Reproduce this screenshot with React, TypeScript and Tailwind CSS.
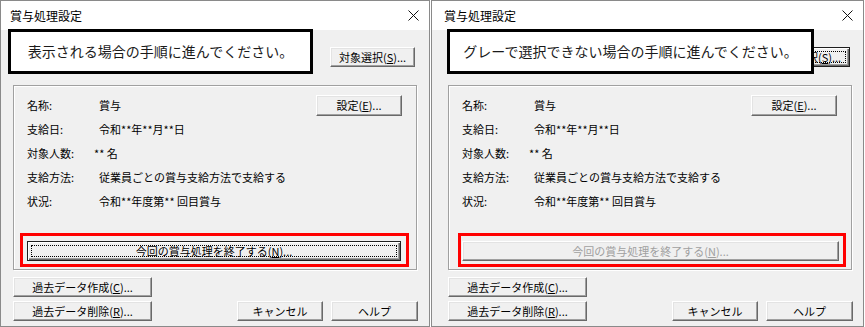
import type { ReactNode } from "react";
import clsx from "clsx";

const jp = "font-['Noto_Sans_CJK_JP','Noto_Sans',sans-serif]";

function Btn({
    children,
    className,
    focus,
    disabled,
}: {
    children: ReactNode;
    className?: string;
    focus?: boolean;
    disabled?: boolean;
}) {
    return (
        <button
            type="button"
            className={clsx(
                "relative flex items-center justify-center h-[20px] text-[11px] leading-none bg-[#f0f0f0] whitespace-nowrap",
                focus
                    ? "border border-[#1e1e1e] shadow-[inset_1px_1px_0_#fff,inset_-1px_-1px_0_#696969,inset_-2px_-2px_0_#a0a0a0]"
                    : "border border-t-white border-l-white border-r-[#696969] border-b-[#696969] shadow-[inset_-1px_-1px_0_#a0a0a0,inset_1px_1px_0_#e3e3e3]",
                disabled ? "text-[#a0a0a0]" : "text-black",
                className
            )}
        >
            {focus && <span className="absolute inset-[3px] border border-dotted border-black" />}
            <span className="relative">{children}</span>
        </button>
    );
}

const rows = [
    { label: "名称:", value: "賞与" },
    { label: "支給日:", value: "令和**年**月**日" },
    { label: "対象人数:", value: "** 名", shift: true },
    { label: "支給方法:", value: "従業員ごとの賞与支給方法で支給する" },
    { label: "状況:", value: "令和**年度第** 回目賞与" },
];

function Dialog({
    wide,
    note,
    endEnabled,
}: {
    wide?: boolean;
    note: string;
    endEnabled?: boolean;
}) {
    return (
        <div
            className={clsx(
                "relative flex flex-col h-[327px] border border-[#8a8a8a] bg-[#f0f0f0] shrink-0",
                wide ? "w-[433px]" : "w-[430px]"
            )}
        >
            <div className={clsx("h-[29px] bg-white flex items-center pr-[10px]", wide ? "pl-[12px]" : "pl-[9px]")}>
                <span className="text-[12px] text-black">賞与処理設定</span>
                <svg className="ml-auto" width="11" height="11" viewBox="0 0 11 11">
                    <path d="M0.5 0.5 L10.5 10.5 M10.5 0.5 L0.5 10.5" stroke="#111" strokeWidth="1" fill="none" />
                </svg>
            </div>

            <div className={clsx("flex flex-col pt-[17px] pb-[5px]", wide ? "pl-[16px]" : "pl-[12px]")}>
                <div className="flex justify-end w-[404px] pr-[2px]">
                    <Btn className="w-[85px]" focus={!endEnabled}>
                        対象選択(<u>S</u>)...
                    </Btn>
                </div>

                <div className="mt-[18px] w-[404px] h-[185px] border border-[#a0a0a0] shadow-[inset_1px_1px_0_#fff,1px_1px_0_#fff] flex flex-col pt-[7px]">
                    <div className="flex flex-col pl-[13px] pr-[14px]">
                        {rows.map((row, i) => (
                            <div key={row.label} className="h-[24px] flex items-center text-[11px] text-black">
                                <span className="w-[72px]">{row.label}</span>
                                <span className={clsx(row.shift && "-ml-[5px]")}>{row.value}</span>
                                {i === 0 && (
                                    <Btn className="ml-auto w-[86px] h-[21px]">
                                        設定(<u>E</u>)...
                                    </Btn>
                                )}
                            </div>
                        ))}
                    </div>

                    <div
                        className={clsx(
                            "mt-[20px] border-[3px] border-[#ff0000] pt-[5px] pb-[3px]",
                            wide ? "ml-[9px] mr-[5px] pl-[1px] pr-[4px]" : "ml-[6px] mr-[7px] pl-[4px] pr-[5px]"
                        )}
                    >
                        <Btn className="w-full" focus={endEnabled} disabled={!endEnabled}>
                            今回の賞与処理を終了する(<u>N</u>)...
                        </Btn>
                    </div>
                </div>

                <div className="mt-[7px] flex items-end w-[405px]">
                    <div className="flex flex-col gap-[4px]">
                        <Btn className="w-[139px]">
                            過去データ作成(<u>C</u>)...
                        </Btn>
                        <Btn className="w-[139px]">
                            過去データ削除(<u>R</u>)...
                        </Btn>
                    </div>
                    <div className="ml-auto flex gap-[8px]">
                        <Btn className="w-[86px]">キャンセル</Btn>
                        <Btn className="w-[87px]">ヘルプ</Btn>
                    </div>
                </div>
            </div>

            {/* annotation callout drawn over the dialog */}
            <div
                className={clsx(
                    "absolute top-[28px] h-[45px] border-[3px] border-black bg-white flex items-center justify-center text-[14px] text-[#1a1a1a]",
                    wide ? "left-[15px] w-[367px]" : "left-[7px] w-[305px]"
                )}
            >
                {note}
            </div>
        </div>
    );
}

export default function App() {
    return (
        <div className={clsx("flex gap-[1px] bg-white w-[865px] h-[327px] overflow-hidden", jp)}>
            <Dialog note="表示される場合の手順に進んでください。" endEnabled />
            <Dialog wide note="グレーで選択できない場合の手順に進んでください。" />
        </div>
    );
}
